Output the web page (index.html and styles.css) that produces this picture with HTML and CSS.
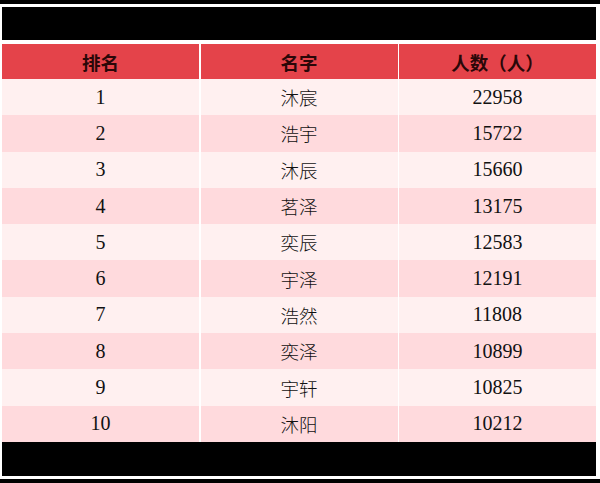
FILE: index.html
```html
<!DOCTYPE html>
<html lang="zh-CN">
<head>
<meta charset="utf-8">
<link rel="stylesheet" href="styles.css">
</head>
<body>
<div class="page">
  <div class="bar"></div>
  <div class="inner">
    <div class="block title-block"></div>
    <div class="table">
      <div class="cell head">排名</div><div class="cell head">名字</div><div class="cell head">人数（人）</div>
      <div class="cell odd num">1</div><div class="cell odd zh">沐宸</div><div class="cell odd num">22958</div>
      <div class="cell even num">2</div><div class="cell even zh">浩宇</div><div class="cell even num">15722</div>
      <div class="cell odd num">3</div><div class="cell odd zh">沐辰</div><div class="cell odd num">15660</div>
      <div class="cell even num">4</div><div class="cell even zh">茗泽</div><div class="cell even num">13175</div>
      <div class="cell odd num">5</div><div class="cell odd zh">奕辰</div><div class="cell odd num">12583</div>
      <div class="cell even num">6</div><div class="cell even zh">宇泽</div><div class="cell even num">12191</div>
      <div class="cell odd num">7</div><div class="cell odd zh">浩然</div><div class="cell odd num">11808</div>
      <div class="cell even num">8</div><div class="cell even zh">奕泽</div><div class="cell even num">10899</div>
      <div class="cell odd num">9</div><div class="cell odd zh">宇轩</div><div class="cell odd num">10825</div>
      <div class="cell even num">10</div><div class="cell even zh">沐阳</div><div class="cell even num">10212</div>
    </div>
    <div class="block foot-block"></div>
  </div>
  <div class="bar bottom"></div>
</div>
</body>
</html>
```
FILE: styles.css
```css
html, body {
  margin: 0;
  padding: 0;
  background: #ffffff;
}
.page {
  width: 600px;
  height: 483px;
  display: flex;
  flex-direction: column;
  overflow: hidden;
}
.bar {
  height: 4px;
  background: #000;
  flex: none;
}
.bar.bottom {
  margin-top: 3px;
}
.inner {
  padding: 0 4px 0 2px;
  display: flex;
  flex-direction: column;
}
.block {
  background: #000;
}
.title-block {
  margin-top: 3px;
  height: 33px;
}
.foot-block {
  height: 34px;
}
.table {
  margin-top: 4px;
  display: grid;
  grid-template-columns: 1fr 1fr 1fr;
  grid-template-rows: 35px repeat(10, 36.3px);
  column-gap: 1.5px;
}
.cell {
  display: flex;
  align-items: center;
  justify-content: center;
  color: #111;
}
.head {
  background: #e4434a;
  color: #2a0708;
  font-family: "Noto Sans CJK SC", sans-serif;
  font-weight: 700;
  font-size: 18.5px;
}
.odd {
  background: #fff0f0;
}
.even {
  background: #ffdadd;
}
.num {
  font-family: "Liberation Serif", serif;
  font-size: 20px;
}
.zh {
  font-family: "Noto Sans CJK SC", sans-serif;
  font-weight: 300;
  font-size: 18.5px;
}
```
